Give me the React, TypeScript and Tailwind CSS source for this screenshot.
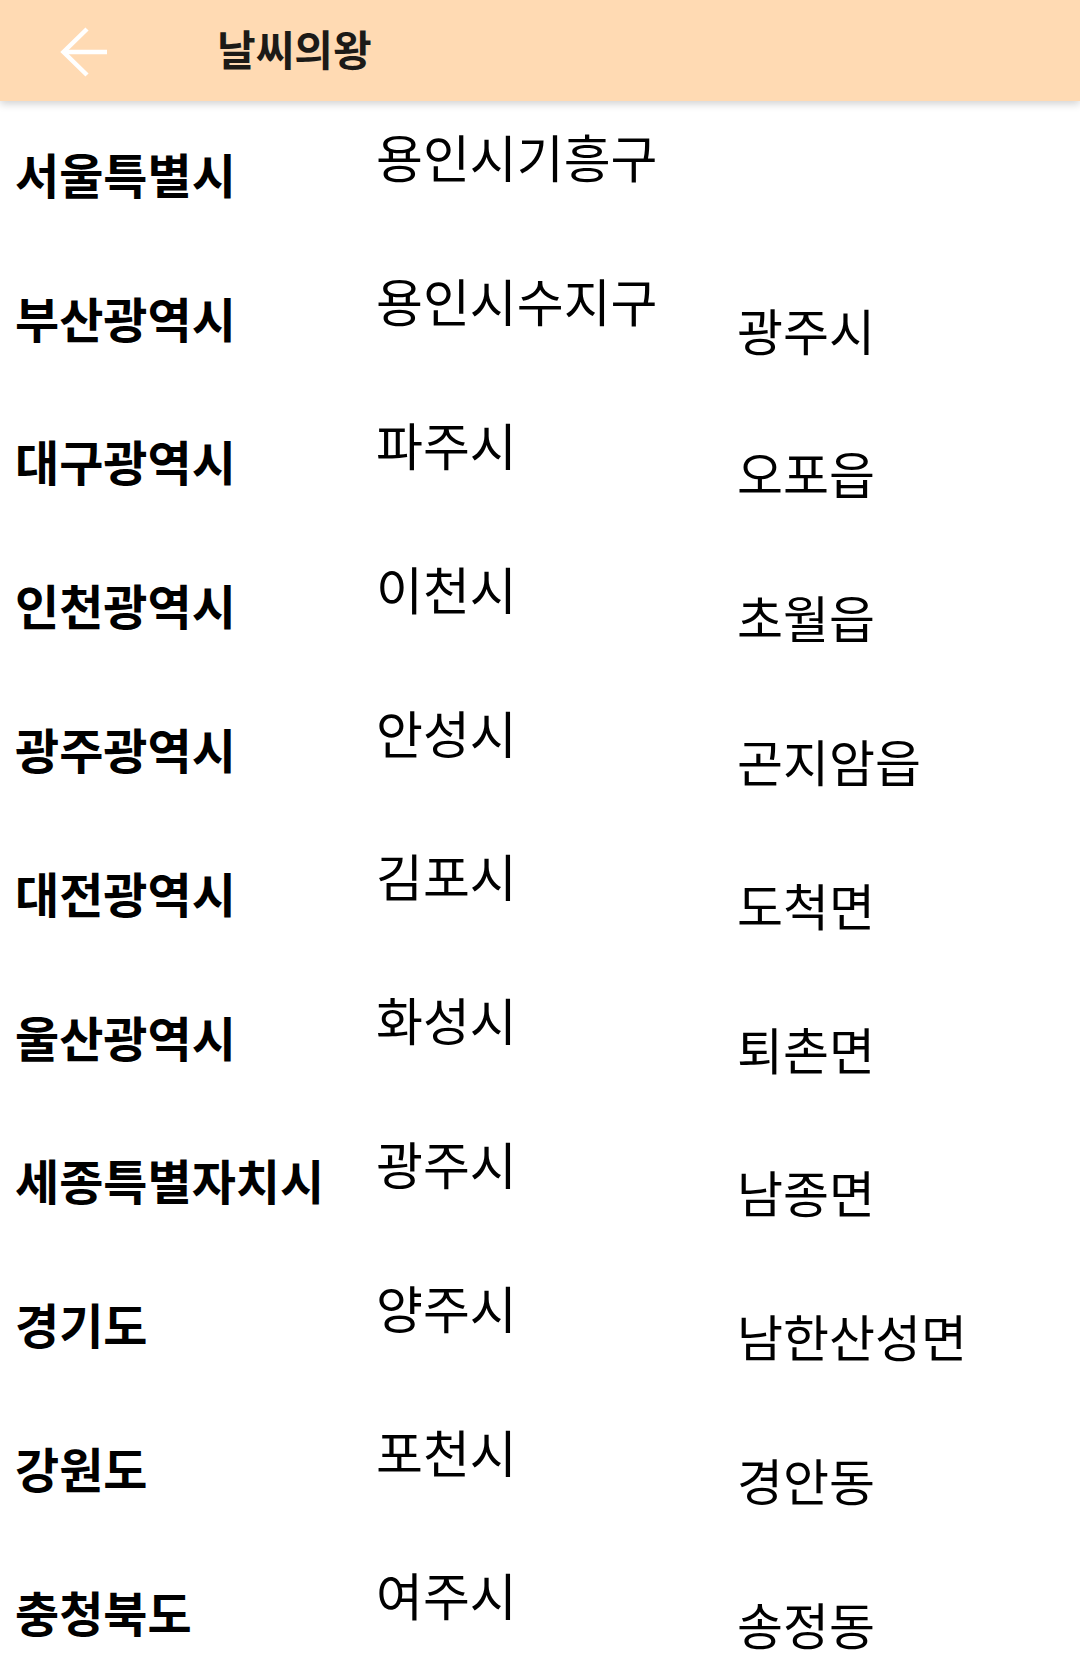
import React from 'react';

const provinces = [
  '서울특별시',
  '부산광역시',
  '대구광역시',
  '인천광역시',
  '광주광역시',
  '대전광역시',
  '울산광역시',
  '세종특별자치시',
  '경기도',
  '강원도',
  '충청북도',
];

const cities = [
  '용인시기흥구',
  '용인시수지구',
  '파주시',
  '이천시',
  '안성시',
  '김포시',
  '화성시',
  '광주시',
  '양주시',
  '포천시',
  '여주시',
];

const towns = [
  '',
  '광주시',
  '오포읍',
  '초월읍',
  '곤지암읍',
  '도척면',
  '퇴촌면',
  '남종면',
  '남한산성면',
  '경안동',
  '송정동',
];

function BackArrow() {
  return (
    <svg width="50" height="52" viewBox="0 0 50 52" fill="none" className="block">
      <path d="M48 26H4" stroke="white" strokeWidth="4.5" />
      <path d="M28 3L4.5 26L28 49" stroke="white" strokeWidth="4.5" />
    </svg>
  );
}

export default function App() {
  return (
    <div
      className="w-[1080px] h-[1665px] overflow-hidden bg-white relative"
      style={{ fontFamily: '"Noto Sans CJK KR", "Noto Sans", sans-serif' }}
    >
      <header className="relative z-10 h-[101px] bg-[#ffdab3] shadow-[0_3px_8px_rgba(0,0,0,0.18)] flex items-center">
        <button className="ml-[59px] mt-[3px] w-[50px] h-[52px] flex items-center justify-center">
          <BackArrow />
        </button>
        <h1 className="ml-[108px] -mt-[5px] text-[42px] leading-none font-bold text-[#1c1a17]">날씨의왕</h1>
      </header>

      <div className="grid grid-cols-3">
        <ul>
          {provinces.map((p) => (
            <li key={p} className="h-[143.8px] flex items-center pl-[15px] text-[48px] leading-none font-bold text-black whitespace-nowrap">
              {p}
            </li>
          ))}
        </ul>
        <ul>
          {cities.map((c, i) => (
            <li key={i} className="h-[143.8px] pb-[32px] flex items-center pl-[16px] text-[51px] leading-none text-black whitespace-nowrap">
              {c}
            </li>
          ))}
        </ul>
        <ul>
          {towns.map((t, i) => (
            <li key={i} className="h-[143.8px] pt-[24px] flex items-center pl-[17px] text-[50px] leading-none text-black whitespace-nowrap">
              {t}
            </li>
          ))}
        </ul>
      </div>
    </div>
  );
}
